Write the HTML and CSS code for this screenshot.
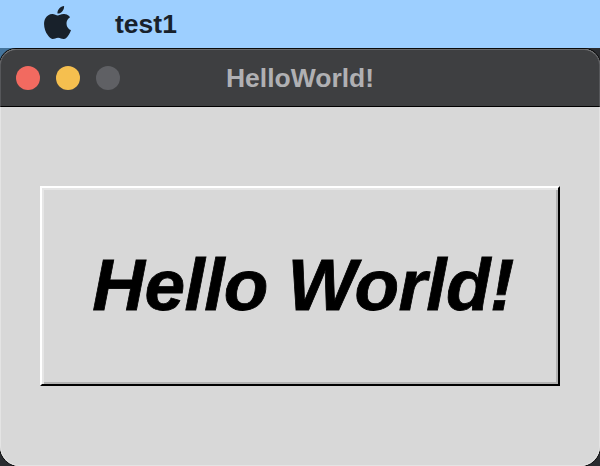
FILE: index.html
```html
<!DOCTYPE HTML>
<html>

<head>
    <title>HelloWorld!</title>
    <meta name="viewport" content="width=device-width, initial-scale=1">
    <link rel="stylesheet" href="styles.css">
</head>

<body>
    <div class="menubar">
        <svg class="apple" viewBox="0 0 24 24">
            <path d="M12.152 6.896c-.948 0-2.415-1.078-3.96-1.04-2.04.027-3.91 1.183-4.961 3.014-2.117 3.675-.546 9.103 1.519 12.09 1.013 1.454 2.208 3.09 3.792 3.039 1.52-.065 2.09-.987 3.935-.987 1.831 0 2.35.987 3.96.948 1.637-.026 2.676-1.48 3.676-2.948 1.156-1.688 1.636-3.325 1.662-3.415-.039-.013-3.182-1.221-3.22-4.857-.026-3.04 2.48-4.494 2.597-4.559-1.429-2.09-3.623-2.324-4.39-2.376-2-.156-3.675 1.09-4.61 1.09zM15.53 3.83c.843-1.012 1.4-2.427 1.245-3.83-1.207.052-2.662.805-3.532 1.818-.78.896-1.454 2.338-1.273 3.714 1.338.104 2.715-.688 3.559-1.701"/>
        </svg>
        <span class="app-name">test1</span>
    </div>
    <div class="window">
        <div class="titlebar">
            <div class="lights">
                <span class="light close"></span>
                <span class="light minimize"></span>
                <span class="light zoom"></span>
            </div>
            <span class="title">HelloWorld!</span>
        </div>
        <div class="content">
            <button class="hello">Hello World!</button>
        </div>
    </div>
</body>

</html>
```

FILE: styles.css
```css
html {
    font-family: "Liberation Sans", Arial, Helvetica, sans-serif;
}

body {
    margin: 0;
    width: 600px;
    height: 466px;
    overflow: hidden;
    background: linear-gradient(#44749c, #44749c) no-repeat 0 0 / 20px 80px, #2a2c30;
    display: flex;
    flex-direction: column;
}

.menubar {
    height: 48px;
    flex-shrink: 0;
    background-color: #9dcfff;
    display: flex;
    align-items: center;
    padding-left: 41px;
}

.apple {
    width: 33px;
    height: 33px;
    fill: #18212b;
    margin-top: -3px;
}

.app-name {
    margin-left: 41px;
    font-size: 26.5px;
    font-weight: bold;
    color: #18212b;
}

.window {
    flex: 1;
    margin-top: 1px;
    display: flex;
    flex-direction: column;
    border-radius: 16px 16px 20px 20px;
    background-color: #d8d8d8;
    box-shadow: 0 0 0 1px #0b0b0b;
}

.titlebar {
    height: 56px;
    flex-shrink: 0;
    background-color: #3e3f41;
    border-top: 1px solid #6a6b6d;
    border-left: 1px solid #56575a;
    border-right: 1px solid #56575a;
    border-bottom: 1px solid #000;
    border-radius: 16px 16px 0 0;
    display: flex;
    align-items: center;
    justify-content: center;
    position: relative;
}

.lights {
    position: absolute;
    left: 15px;
    top: 16px;
    display: flex;
    gap: 16px;
}

.light {
    width: 24px;
    height: 24px;
    border-radius: 50%;
}

.close {
    background-color: #f26a60;
}

.minimize {
    background-color: #f5bf4f;
}

.zoom {
    background-color: #5f6064;
}

.title {
    font-size: 26.5px;
    font-weight: bold;
    color: #b0b0b3;
}

.content {
    flex: 1;
    padding: 79px 40px 0 40px;
    border-radius: 0 0 20px 20px;
    box-shadow: inset 1px 0 0 #e4e4e4, inset -1px 0 0 #e4e4e4, inset 0 -1px 0 #e4e4e4;
}

.hello {
    display: block;
    width: 100%;
    height: 200px;
    box-sizing: border-box;
    padding: 0 0 4px 6px;
    background-color: #d8d8d8;
    border-style: solid;
    border-width: 2px;
    border-color: #fff #000 #000 #fff;
    box-shadow: inset 2px 2px 0 #e6e6e6, inset -2px -2px 0 #b2b2b2;
    font-family: "Liberation Sans", Arial, Helvetica, sans-serif;
    font-size: 73px;
    font-weight: bold;
    font-style: italic;
    letter-spacing: -0.6px;
    -webkit-text-stroke: 0.8px #000;
    color: #000;
}
```
